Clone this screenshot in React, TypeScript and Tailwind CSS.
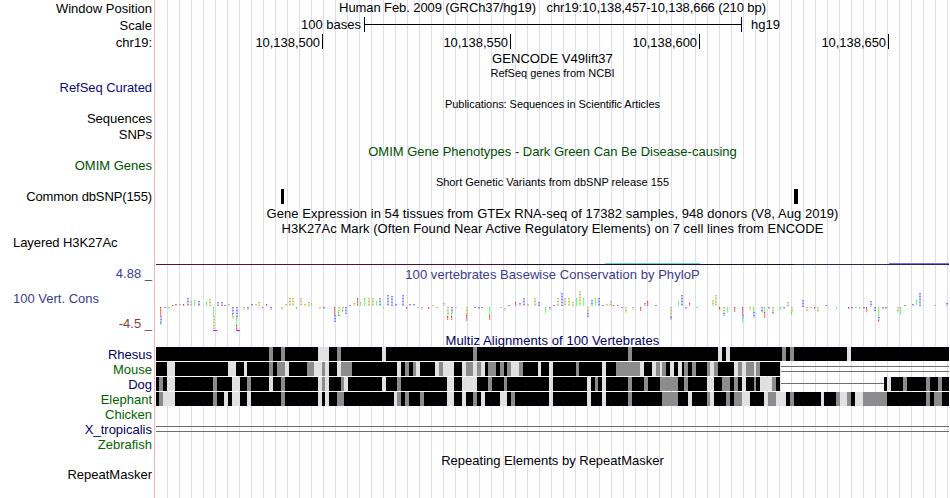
import { ReactNode } from 'react'

type Shade = 'g' | 'l'
type Base = 'A' | 'C' | 'G' | 'T'
type Span = [number, number, Shade]
type Glyph = [number, number, number, Base]

const labels = [
    { text: 'Window Position', className: 'mt-px' },
    { text: 'Scale', className: 'mt-[2px]' },
    { text: 'chr19:', className: 'mt-[2px]' },
    {
        text: 'RefSeq Curated',
        className: 'mt-[30px] tracking-[-0.06px] text-[#0c0c78]',
    },
    { text: 'Sequences', className: 'mt-4' },
    { text: 'SNPs', className: 'mt-px' },
    { text: 'OMIM Genes', className: 'mt-4 text-[#005000]' },
    { text: 'Common dbSNP(155)', className: 'mt-4 tracking-[-0.12px]' },
    {
        text: 'Layered H3K27Ac',
        className: 'mt-[31px] pl-[13px] text-left tracking-[-0.07px]',
    },
    { text: '4.88 _', className: 'mt-4 text-[#3c3c8c]' },
    {
        text: '100 Vert. Cons',
        className: 'mt-[10px] pl-[13px] text-left text-[#3c3c8c]',
    },
    { text: '-4.5 _', className: 'mt-[10px] text-[#8c3c3c]' },
    { text: 'Rhesus', className: 'mt-4 text-[#000064]' },
    { text: 'Mouse', className: 'text-[#006400]' },
    { text: 'Dog', className: 'text-[#000064]' },
    { text: 'Elephant', className: 'text-[#006400]' },
    { text: 'Chicken', className: 'text-[#006400]' },
    { text: 'X_tropicalis', className: 'text-[#000064]' },
    { text: 'Zebrafish', className: 'text-[#006400]' },
    { text: 'RepeatMasker', className: 'mt-[15px]' },
]

const rhesus: Span[] = [
    [269, 273, 'g'], [281, 285, 'g'], [318, 329, 'l'], [337, 341, 'g'],
    [382, 386, 'l'], [473, 477, 'g'], [628, 632, 'g'], [718, 722, 'l'],
    [726, 730, 'l'], [782, 786, 'g'], [790, 794, 'g'], [847, 851, 'l'],
]

const mouse: Span[] = [
    [167, 175, 'l'], [228, 236, 'l'], [244, 247, 'l'], [269, 273, 'g'],
    [277, 285, 'g'], [285, 289, 'l'], [307, 314, 'g'], [314, 322, 'l'],
    [322, 325, 'g'], [325, 329, 'l'], [337, 341, 'l'], [341, 352, 'g'],
    [397, 401, 'l'], [405, 409, 'g'], [413, 416, 'g'], [416, 420, 'l'],
    [435, 439, 'l'], [439, 443, 'g'], [443, 454, 'l'], [462, 466, 'l'],
    [466, 473, 'g'], [473, 477, 'l'], [477, 481, 'g'], [481, 485, 'l'],
    [488, 496, 'g'], [500, 504, 'g'], [507, 511, 'g'], [511, 519, 'l'],
    [519, 523, 'g'], [538, 541, 'l'], [549, 553, 'l'], [576, 579, 'g'],
    [602, 606, 'l'], [616, 640, 'g'], [640, 644, 'l'], [652, 656, 'l'],
    [656, 660, 'g'], [660, 662, 'l'], [662, 666, 'g'], [670, 674, 'l'],
    [678, 682, 'l'], [684, 688, 'g'], [692, 696, 'g'], [707, 710, 'g'],
    [710, 714, 'l'], [714, 718, 'g'], [734, 738, 'l'], [738, 742, 'g'],
    [742, 746, 'l'], [746, 754, 'g'], [754, 756, 'l'], [756, 760, 'g'],
    [780, 781, 'l'],
]

const dog: Span[] = [
    [159, 163, 'g'], [167, 175, 'l'], [213, 217, 'g'], [232, 240, 'l'],
    [247, 251, 'g'], [269, 273, 'l'], [281, 285, 'g'], [318, 322, 'l'],
    [322, 325, 'g'], [325, 329, 'l'], [341, 344, 'g'], [344, 348, 'l'],
    [382, 386, 'l'], [397, 401, 'g'], [447, 454, 'l'], [462, 477, 'l'],
    [488, 492, 'g'], [504, 507, 'g'], [549, 553, 'l'], [587, 591, 'l'],
    [595, 598, 'g'], [602, 606, 'l'], [628, 632, 'g'], [644, 648, 'g'],
    [660, 678, 'g'], [684, 688, 'g'], [707, 714, 'l'], [722, 730, 'g'],
    [734, 738, 'g'], [742, 746, 'l'], [754, 756, 'g'], [760, 772, 'l'],
    [772, 776, 'g'], [780, 781, 'l'], [887, 891, 'l'], [903, 907, 'g'],
    [926, 930, 'g'], [938, 942, 'g'],
]

const elephant: Span[] = [
    [159, 163, 'g'], [163, 175, 'l'], [213, 217, 'g'], [224, 228, 'l'],
    [232, 240, 'l'], [247, 251, 'l'], [281, 285, 'g'], [318, 322, 'l'],
    [325, 329, 'l'], [337, 344, 'g'], [394, 397, 'l'], [397, 401, 'g'],
    [405, 409, 'g'], [420, 424, 'g'], [447, 454, 'l'], [462, 466, 'l'],
    [473, 477, 'g'], [481, 485, 'l'], [500, 507, 'l'], [511, 515, 'g'],
    [549, 553, 'l'], [587, 591, 'l'], [602, 606, 'l'], [628, 632, 'g'],
    [662, 678, 'g'], [688, 692, 'l'], [707, 710, 'g'], [710, 714, 'l'],
    [726, 730, 'g'], [734, 742, 'g'], [742, 750, 'l'], [764, 768, 'l'],
    [768, 776, 'g'], [776, 786, 'l'], [790, 794, 'g'], [821, 824, 'l'],
    [836, 840, 'g'], [840, 847, 'l'], [847, 851, 'g'], [855, 863, 'l'],
    [863, 887, 'g'], [926, 930, 'g'], [934, 942, 'g'],
]

// x, top, height, base
const glyphs: Glyph[] = [
    [160, 307, 9, 'T'], [160, 316, 7, 'C'], [160, 323, 2, 'A'], [164, 307, 1, 'C'],
    [168, 307, 2, 'G'], [172, 305, 1, 'T'], [175, 304, 2, 'C'], [179, 304, 2, 'G'],
    [183, 304, 2, 'T'], [187, 298, 8, 'C'], [190, 301, 5, 'G'], [194, 300, 6, 'A'],
    [198, 301, 5, 'C'], [206, 302, 4, 'A'], [209, 299, 7, 'G'], [213, 307, 9, 'A'],
    [213, 316, 13, 'G'], [217, 302, 4, 'C'], [221, 302, 4, 'C'], [224, 305, 1, 'C'],
    [228, 304, 2, 'G'], [232, 307, 7, 'C'], [232, 314, 2, 'A'], [232, 316, 3, 'G'],
    [236, 307, 11, 'C'], [236, 318, 7, 'A'], [236, 325, 5, 'T'], [243, 307, 3, 'G'],
    [247, 307, 3, 'C'], [251, 304, 2, 'C'], [255, 304, 2, 'G'], [258, 302, 4, 'G'],
    [262, 307, 1, 'T'], [266, 304, 2, 'T'], [270, 307, 3, 'C'], [281, 307, 3, 'G'],
    [285, 304, 2, 'G'], [289, 298, 8, 'G'], [292, 298, 8, 'G'], [296, 307, 2, 'A'],
    [300, 298, 8, 'G'], [304, 304, 2, 'G'], [308, 302, 4, 'G'], [311, 303, 3, 'A'],
    [319, 307, 2, 'G'], [323, 307, 2, 'C'], [334, 307, 8, 'T'], [334, 315, 7, 'C'],
    [338, 307, 5, 'G'], [338, 312, 3, 'A'], [338, 315, 1, 'C'], [342, 307, 3, 'G'],
    [342, 310, 2, 'A'], [345, 307, 7, 'C'], [349, 305, 1, 'C'], [353, 303, 3, 'G'],
    [357, 298, 8, 'T'], [360, 302, 4, 'A'], [364, 298, 8, 'A'], [368, 298, 8, 'G'],
    [372, 298, 8, 'G'], [376, 301, 5, 'A'], [379, 298, 8, 'C'], [383, 307, 1, 'A'],
    [387, 295, 11, 'C'], [391, 296, 10, 'C'], [395, 304, 2, 'C'], [402, 295, 11, 'C'],
    [406, 307, 2, 'T'], [409, 304, 2, 'C'], [413, 304, 2, 'C'], [417, 307, 1, 'G'],
    [421, 307, 3, 'G'], [428, 307, 2, 'T'], [432, 305, 1, 'G'], [436, 307, 1, 'G'],
    [443, 303, 3, 'G'], [447, 307, 9, 'G'], [447, 316, 4, 'T'], [451, 307, 6, 'C'],
    [451, 313, 3, 'A'], [451, 316, 4, 'T'], [455, 307, 1, 'G'], [466, 307, 8, 'G'],
    [466, 315, 6, 'T'], [474, 307, 1, 'C'], [478, 307, 2, 'C'], [481, 307, 1, 'C'],
    [489, 307, 8, 'A'], [489, 315, 5, 'T'], [500, 307, 1, 'G'], [504, 308, 3, 'G'],
    [508, 305, 1, 'C'], [515, 302, 4, 'T'], [519, 303, 3, 'C'], [523, 298, 8, 'C'],
    [527, 304, 2, 'G'], [534, 298, 8, 'G'], [538, 302, 4, 'C'], [545, 307, 6, 'A'],
    [549, 307, 3, 'C'], [553, 305, 1, 'C'], [557, 298, 8, 'G'], [561, 293, 13, 'C'],
    [564, 298, 8, 'G'], [568, 298, 8, 'G'], [572, 302, 4, 'G'], [576, 298, 8, 'A'],
    [579, 291, 15, 'G'], [583, 298, 8, 'A'], [587, 307, 6, 'G'], [587, 313, 4, 'C'],
    [591, 300, 6, 'C'], [595, 298, 8, 'A'], [598, 298, 8, 'C'], [602, 305, 1, 'C'],
    [606, 304, 2, 'G'], [610, 301, 5, 'G'], [613, 305, 1, 'T'], [617, 305, 1, 'T'],
    [621, 307, 1, 'C'], [625, 307, 6, 'G'], [632, 307, 3, 'G'], [640, 307, 4, 'T'],
    [644, 303, 3, 'C'], [647, 301, 5, 'T'], [655, 305, 1, 'C'], [670, 307, 10, 'G'],
    [670, 317, 3, 'C'], [678, 301, 5, 'A'], [681, 295, 11, 'C'], [685, 307, 2, 'C'],
    [689, 303, 3, 'T'], [696, 307, 1, 'A'], [712, 300, 6, 'G'], [715, 295, 11, 'G'],
    [719, 307, 3, 'T'], [723, 307, 6, 'G'], [723, 313, 3, 'C'], [727, 307, 6, 'A'],
    [734, 307, 5, 'T'], [742, 307, 8, 'T'], [742, 315, 3, 'C'], [742, 318, 5, 'A'],
    [749, 307, 3, 'G'], [753, 307, 5, 'A'], [753, 312, 6, 'C'], [761, 307, 4, 'C'],
    [761, 311, 2, 'G'], [764, 307, 5, 'A'], [764, 312, 6, 'T'], [768, 307, 2, 'C'],
    [772, 307, 5, 'G'], [772, 312, 2, 'C'], [780, 307, 3, 'A'], [783, 307, 2, 'C'],
    [787, 302, 5, 'G'], [791, 307, 5, 'G'], [791, 312, 3, 'A'], [802, 300, 7, 'C'],
    [806, 307, 4, 'G'], [810, 307, 1, 'G'], [814, 307, 2, 'T'], [817, 307, 5, 'G'],
    [825, 305, 1, 'C'], [836, 307, 2, 'A'], [848, 307, 2, 'T'], [851, 307, 2, 'C'],
    [855, 307, 1, 'G'], [859, 307, 2, 'A'], [863, 307, 2, 'C'], [866, 307, 5, 'T'],
    [870, 301, 6, 'C'], [874, 307, 4, 'C'], [878, 307, 10, 'A'], [878, 317, 3, 'C'],
    [878, 320, 2, 'T'], [882, 307, 2, 'C'], [885, 307, 2, 'C'], [897, 307, 6, 'G'],
    [900, 307, 8, 'A'], [904, 305, 1, 'C'], [912, 304, 2, 'C'], [916, 300, 5, 'A'],
    [919, 293, 13, 'C'], [934, 305, 1, 'G'], [946, 303, 3, 'C'],
]

const shades = { g: '#8c8c8c', l: '#e1e1e1' }
const bases = { A: '#00ff00', C: '#3232ff', G: '#a0a000', T: '#ff0000' }

const Title = ({
    className = '',
    children,
}: {
    className?: string
    children: ReactNode
}) => (
    <div className={`h-[15px] text-center whitespace-pre ${className}`}>
        {children}
    </div>
)

const Alignment = ({
    blocks,
    spans,
}: {
    blocks: [number, number][]
    spans: Span[]
}) => (
    <g>
        {blocks.map(([from, to]) => (
            <rect key={from} x={from} y="0" width={to - from} height="14" />
        ))}
        {spans.map(([from, to, shade]) => (
            <rect
                key={from}
                x={from}
                y="0"
                width={to - from}
                height="14"
                fill={shades[shade]}
            />
        ))}
    </g>
)

const Track = ({ children }: { children?: ReactNode }) => (
    <svg
        className="block h-[15px] w-[793px]"
        viewBox="156 0 793 15"
        shapeRendering="crispEdges"
    >
        {children}
    </svg>
)

const Logo = () => (
    <svg
        className="mt-2 block h-[43px] w-[793px]"
        viewBox="156 290 793 43"
        shapeRendering="crispEdges"
    >
        {glyphs.map(([x, y, h, base]) =>
            base === 'A' || base === 'T' ? (
                <g key={`${x}-${y}`} fill={bases[base]}>
                    <rect x={x} y={y} width="1" height={h} opacity="0.5" />
                    <rect x={x + 1} y={y} width="1" height={h} opacity="0.12" />
                    <rect x={x} y={y} width="1" height="1" opacity="0.7" />
                </g>
            ) : (
                <g key={`${x}-${y}`} fill={bases[base]}>
                    <rect x={x} y={y} width="2" height={h} opacity="0.25" />
                    <path
                        d={`M${x + 0.5} ${y}v${h}M${x + 1.5} ${y}v${h}`}
                        stroke={bases[base]}
                        strokeDasharray="1 2"
                        opacity="0.4"
                    />
                </g>
            ),
        )}
        <path d="M213 330.5h4M236 330.5h4" stroke="#ff00ff" />
    </svg>
)

const App = () => {
    return (
        <div className="flex h-[498px] w-[949px] overflow-hidden bg-white font-['Liberation_Sans',Arial,sans-serif] text-[13px] leading-[15px] text-black">
            <div className="flex w-[154px] shrink-0 flex-col pr-[2px] text-right">
                {labels.map(({ text, className }) => (
                    <div
                        key={text}
                        className={`h-[15px] shrink-0 whitespace-pre ${className}`}
                    >
                        {text}
                    </div>
                ))}
            </div>
            <div className="mr-px w-px shrink-0 bg-[#ffb4b4]" />
            <div className="flex w-[793px] shrink-0 flex-col bg-[linear-gradient(to_right,transparent_11px,#dcdcff_11px)] bg-[length:12px_100%]">
                <Title className="tracking-[-0.09px]">
                    {'Human Feb. 2009 (GRCh37/hg19)   chr19:10,138,457-10,138,666 (210 bp)'}
                </Title>
                <div className="mt-[2px] flex h-[15px]">
                    <span className="w-[205px] text-right">100 bases</span>
                    <div className="ml-[3px] flex w-[378px] items-center border-x border-black">
                        <div className="h-px w-full bg-black" />
                    </div>
                    <span className="ml-[9px]">hg19</span>
                </div>
                <div className="mt-[2px] flex h-[15px] text-right leading-[17px] tracking-[-0.05px]">
                    <div className="w-[167px] border-r border-black pr-[2px]">
                        10,138,500
                    </div>
                    <div className="w-[188px] border-r border-black pr-[2px]">
                        10,138,550
                    </div>
                    <div className="w-[189px] border-r border-black pr-[2px]">
                        10,138,600
                    </div>
                    <div className="w-[189px] border-r border-black pr-[2px]">
                        10,138,650
                    </div>
                </div>
                <Title className="mt-[2px] tracking-[0.05px]">
                    GENCODE V49lift37
                </Title>
                <Title className="text-[11px]">RefSeq genes from NCBI</Title>
                <Title className="mt-4 text-[11px] tracking-[-0.06px]">
                    Publications: Sequences in Scientific Articles
                </Title>
                <Title className="mt-8 text-[#005000]">
                    OMIM Gene Phenotypes - Dark Green Can Be Disease-causing
                </Title>
                <Title className="mt-4 text-[11px]">
                    Short Genetic Variants from dbSNP release 155
                </Title>
                <div className="mt-[-1px] flex h-[15px]">
                    <div className="ml-[125px] w-[3px] bg-black" />
                    <div className="ml-[510px] w-1 bg-black" />
                </div>
                <Title className="mt-[2px] tracking-[0.05px]">
                    Gene Expression in 54 tissues from GTEx RNA-seq of 17382
                    samples, 948 donors (V8, Aug 2019)
                </Title>
                <Title className="tracking-[0.05px]">
                    H3K27Ac Mark (Often Found Near Active Regulatory Elements)
                    on 7 cell lines from ENCODE
                </Title>
                <svg
                    className="mt-[27px] block h-[2px] w-[793px]"
                    viewBox="156 263 793 2"
                    shapeRendering="crispEdges"
                >
                    <rect x="156" y="264" width="200" height="1" fill="#640f32" />
                    <rect x="356" y="264" width="155" height="1" fill="#550f23" />
                    <rect x="511" y="264" width="283" height="1" fill="#1e0a28" />
                    <rect x="794" y="264" width="155" height="1" fill="#28285f" />
                    <rect x="605" y="263" width="95" height="1" fill="#64dcc0" />
                    <rect x="889" y="263" width="60" height="1" fill="#7373f0" />
                </svg>
                <Title className="mt-[2px] tracking-[0.05px] text-[#3c3c8c]">
                    100 vertebrates Basewise Conservation by PhyloP
                </Title>
                <Logo />
                <Title className="-mb-px tracking-[0.08px] text-[#000064]">
                    Multiz Alignments of 100 Vertebrates
                </Title>
                <Track>
                    <Alignment blocks={[[156, 949]]} spans={rhesus} />
                </Track>
                <Track>
                    <Alignment blocks={[[156, 780]]} spans={mouse} />
                    <path d="M781 4.5H949M781 9.5H949" stroke="#6e6e6e" />
                </Track>
                <Track>
                    <Alignment
                        blocks={[
                            [156, 780],
                            [884, 949],
                        ]}
                        spans={dog}
                    />
                    <path d="M781 6.5H884" stroke="#6e6e6e" />
                </Track>
                <Track>
                    <Alignment blocks={[[156, 949]]} spans={elephant} />
                </Track>
                <Track />
                <Track>
                    <path d="M156 4.5H949M156 9.5H949" stroke="#6e6e6e" />
                </Track>
                <Track />
                <Title className="mt-px">Repeating Elements by RepeatMasker</Title>
            </div>
        </div>
    )
}

export default App
